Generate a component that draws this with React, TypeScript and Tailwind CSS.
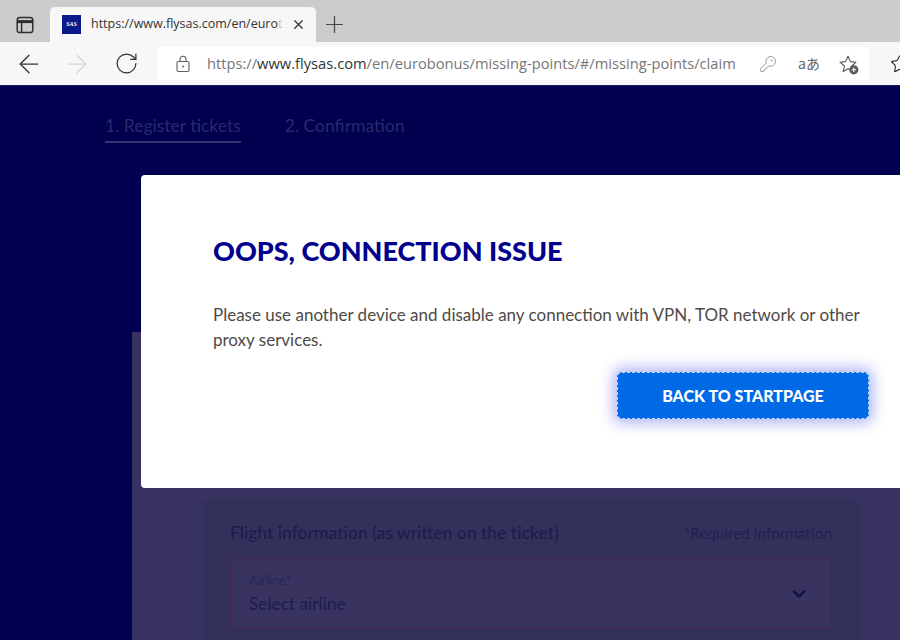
import { ArrowLeft, ArrowRight, ChevronDown, KeyRound, Plus, RotateCw, Star, X } from "lucide-react";

function TabsIcon() {
  return (
    <svg width="18" height="18" viewBox="0 0 18 18" fill="none" stroke="#2f2f2f" strokeWidth="1.5">
      <rect x="1.2" y="1.6" width="15.6" height="15" rx="2.6" />
      <path d="M1.2 5.6h15.6" strokeWidth="3" />
      <path d="M5.6 5.6v11" />
    </svg>
  );
}

function LockIcon() {
  return (
    <svg width="16" height="18" viewBox="0 0 16 18" fill="none" stroke="#5f5f5f" strokeWidth="1.1">
      <rect x="2" y="6.5" width="12" height="10" rx="1.5" />
      <path d="M5 6.5V4.2a3 3 0 0 1 6 0v2.3" />
      <circle cx="8" cy="11.5" r="0.9" fill="#5f5f5f" stroke="none" />
    </svg>
  );
}

function FavAddIcon() {
  return (
    <svg width="22" height="22" viewBox="0 0 22 22" fill="none">
      <path
        d="M10 2.2l2.4 5.4 5.6.6-4.2 3.8 1 5.6-4.8-2.8-4.8 2.8 1.2-5.6L2 8.2l5.6-.6z"
        stroke="#555"
        strokeWidth="1.1"
        strokeLinejoin="round"
      />
      <circle cx="15.8" cy="15.8" r="4.6" fill="#5c5c5c" />
      <path d="M13.6 15.8h4.4M15.8 13.6v4.4" stroke="#fff" strokeWidth="1.1" />
    </svg>
  );
}

export default function App() {
  return (
    <div className="relative flex h-[640px] w-[900px] flex-col overflow-hidden bg-[#00004f] font-['Lato',sans-serif]">
      {/* tab strip */}
      <div className="flex h-[42px] shrink-0 items-end bg-[#cccccc]">
        <div className="flex h-[35px] w-[50px] items-center justify-center">
          <TabsIcon />
        </div>
        <div className="flex h-[35px] w-[266px] items-center rounded-t-[5px] bg-[#f7f7f7] pl-[12px]">
          <div className="flex h-[19px] w-[19px] items-center justify-center bg-[#0a1a8c] font-['Liberation_Serif',serif] text-[6px] font-bold italic text-white">
            SAS
          </div>
          <span className="ml-[10px] w-[191px] text-[12.5px] whitespace-nowrap text-[#333333] font-['Open_Sans',sans-serif]">
            https://www.flysas.com/en/euro<span className="text-[#c4c4c4]">t</span>
          </span>
          <X className="ml-[9px] text-[#333333]" size={15} strokeWidth={2} />
        </div>
        <div className="ml-[5px] flex h-[35px] items-center">
          <Plus className="text-[#444444]" size={27} strokeWidth={1.1} />
        </div>
      </div>

      {/* toolbar */}
      <div className="flex h-[44px] shrink-0 items-center border-b border-[#1f2060] bg-[#f7f7f7]">
        <ArrowLeft className="ml-[14px] shrink-0 text-[#333333]" size={30} strokeWidth={1} />
        <ArrowRight className="ml-[18px] shrink-0 text-[#d6d6d6]" size={30} strokeWidth={1} />
        <RotateCw className="ml-[22px] shrink-0 text-[#333333]" size={25} strokeWidth={1.2} />
        <div className="ml-[18px] flex h-[33px] w-[712px] shrink-0 items-center rounded-[4px] bg-white pl-[18px]">
          <LockIcon />
          <span className="ml-[16px] text-[14.7px] whitespace-nowrap text-[#767676] font-['Open_Sans',sans-serif]">
            https://<span className="text-[#333333]">www.flysas.com</span>/en/eurobonus/missing-points/#/missing-points/claim
          </span>
          <KeyRound className="absolute left-[759px] text-[#888888]" size={18} strokeWidth={1.1} />
          <span className="absolute left-[798px] text-[14px] text-[#666666] font-['Noto_Sans_CJK_JP','Noto_Sans',sans-serif]">
            aあ
          </span>
          <span className="absolute left-[838px] top-[54px]">
            <FavAddIcon />
          </span>
        </div>
        <Star className="ml-[21px] shrink-0 text-[#222222]" size={20} strokeWidth={1.3} />
      </div>

      {/* page behind the dialog */}
      <div className="flex flex-1 flex-col">
        <div className="flex gap-[44px] pl-[105px] pt-[28px] text-[17.5px] text-[#2a2a6a]">
          <span className="border-b-2 border-[#36366f] pb-[3px] leading-[24px]">1. Register tickets</span>
          <span className="leading-[24px]">2. Confirmation</span>
        </div>
        <div className="mt-[189px] ml-[132px] flex-1 bg-[#37325f] pl-[70px] pt-[168px]">
          <div className="h-full w-[658px] bg-[#33305a] pl-[28px] pr-[28px] pt-[20px]">
            <div className="flex items-center justify-between">
              <span className="text-[17.5px] font-medium text-[#1d1b50]">Flight information (as written on the ticket)</span>
              <span className="text-[15.3px] text-[#211f55]">*Required information</span>
            </div>
            <div className="mt-[12px] flex h-[71px] items-center justify-between rounded-[3px] border border-[#3f2460] bg-[#38335f] pl-[18px] pr-[22px]">
              <div className="flex flex-col">
                <span className="text-[13px] leading-[16px] text-[#27255a]">Airline*</span>
                <span className="mt-[4px] text-[17.3px] leading-[24px] text-[#1d1b50]">Select airline</span>
              </div>
              <ChevronDown className="text-[#14124a]" size={20} strokeWidth={3} />
            </div>
          </div>
        </div>
      </div>

      {/* dialog */}
      <div className="absolute left-[141px] top-[175px] h-[313px] w-[800px] rounded-[4px] bg-white pl-[72px] pt-[57px]">
        <h1 className="text-[27px] leading-[38px] font-black text-[#00008c]">OOPS, CONNECTION ISSUE</h1>
        <p className="mt-[32px] w-[660px] text-[17px] leading-[25px] text-[#4f4a45]">
          Please use another device and disable any connection with VPN, TOR network or other proxy services.
        </p>
        <button className="absolute left-[476px] top-[197px] flex h-[47px] w-[252px] items-center justify-center rounded-[5px] border border-dashed border-[#c7d8f5] bg-[#0069e6] text-[16px] font-black text-white shadow-[0_0_14px_4px_rgba(50,70,225,0.4)]">
          BACK TO STARTPAGE
        </button>
      </div>
    </div>
  );
}
